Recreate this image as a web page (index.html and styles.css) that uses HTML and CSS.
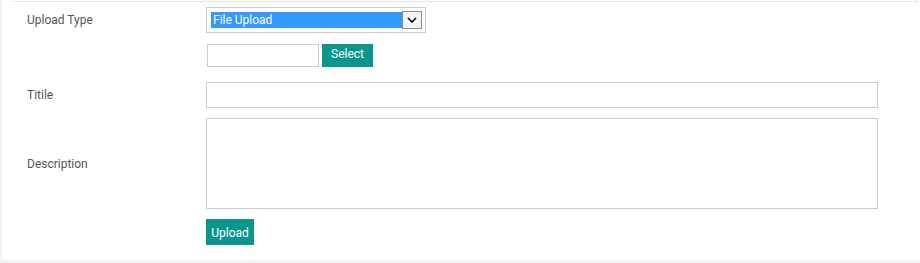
FILE: index.html
```html
<!DOCTYPE html>
<html lang="en">
<head>
    <meta charset="UTF-8" />
    <title>Upload</title>
    <link rel="stylesheet" href="styles.css">
</head>
<body>
    <div class="panel">
        <div class="panel-top"></div>
        <form class="form">
            <div class="row row-type">
                <label class="label">Upload Type</label>
                <div class="field">
                    <div class="select">
                        <span class="select-value">File Upload</span>
                        <span class="select-btn">
                            <svg width="10" height="6" viewBox="0 0 10 6"><path d="M1 1 L5 5 L9 1" fill="none" stroke="#111" stroke-width="1.7"/></svg>
                        </span>
                    </div>
                </div>
            </div>
            <div class="row row-file">
                <span class="label"></span>
                <div class="field file">
                    <span class="file-name"></span>
                    <button type="button" class="btn btn-select">Select</button>
                </div>
            </div>
            <div class="row row-title">
                <label class="label">Titile</label>
                <div class="field"><input type="text" class="input"></div>
            </div>
            <div class="row row-desc">
                <label class="label">Description</label>
                <div class="field"><textarea class="textarea"></textarea></div>
            </div>
            <div class="row row-submit">
                <span class="label"></span>
                <div class="field"><button type="button" class="btn btn-upload">Upload</button></div>
            </div>
        </form>
    </div>
</body>
</html>
```

FILE: styles.css
```css
*{
    margin: 0;
    padding: 0;
    box-sizing: border-box;
}
html,body{
    width: 100%;
    height: 100%;
}
body{
    background-color: #f2f2f2;
    font-family: Roboto, "Liberation Sans", sans-serif;
    font-size: 12px;
    color: #555;
}
.panel{
    margin-left: 2px;
    height: 260px;
    background-color: #fff;
}
.panel-top{
    height: 2px;
    margin: 0 2px 0 10px;
    border: 1px solid #e6e6e6;
    border-top: none;
}
.form{
    padding: 5px 0 0 25px;
    display: flex;
    flex-direction: column;
}
.row{
    display: flex;
    align-items: center;
}
.label{
    width: 179px;
    flex: none;
}
.field{
    flex: none;
}
.row-type{ height: 26px; margin-bottom: 11px; }
.row-file{ height: 23px; margin-bottom: 15px; }
.row-title{ height: 26px; margin-bottom: 10px; }
.row-desc{ height: 91px; margin-bottom: 10px; }
.row-submit{ height: 26px; }

.select{
    display: flex;
    align-items: center;
    width: 220px;
    height: 26px;
    padding: 3px 3px 3px 4px;
    border: 1px solid #c6cdd3;
}
.select-value{
    width: 191px;
    height: 16px;
    line-height: 16px;
    padding-left: 2px;
    background-color: #3399ff;
    color: #fff;
}
.select-btn{
    display: flex;
    align-items: center;
    justify-content: center;
    width: 20px;
    height: 18px;
    border: 1px solid #8f8f8f;
    background-color: #f4f4f4;
}

.file{
    display: flex;
    gap: 3px;
    margin-left: 1px;
}
.file-name{
    width: 112px;
    height: 23px;
    border: 1px solid #cbcbcb;
}
.btn{
    border: none;
    background-color: #0a958f;
    color: #fff;
    font-family: Roboto, "Liberation Sans", sans-serif;
    font-size: 12px;
}
.btn-select{
    width: 51px;
    height: 23px;
    padding-bottom: 3px;
}
.btn-upload{
    width: 48px;
    height: 26px;
    padding-top: 2px;
}
.input{
    display: block;
    width: 672px;
    height: 26px;
    border: 1px solid #c8ced4;
}
.textarea{
    display: block;
    width: 672px;
    height: 91px;
    border: 1px solid #c8ced4;
    resize: none;
}
```
